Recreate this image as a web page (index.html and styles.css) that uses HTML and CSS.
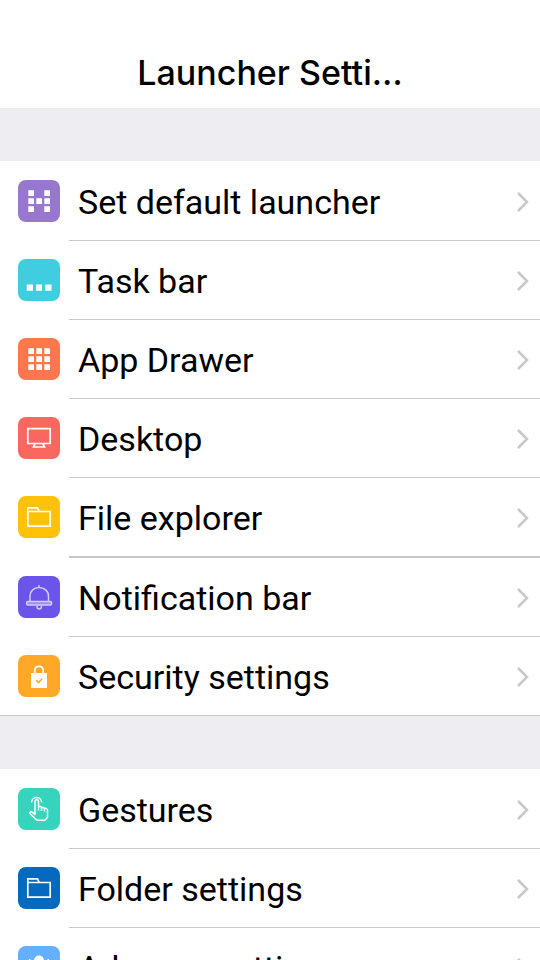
FILE: index.html
```html
<!DOCTYPE html>
<html lang="en">
<head>
<meta charset="utf-8">
<meta name="viewport" content="width=device-width, initial-scale=1">
<title>Launcher Settings</title>
<link rel="stylesheet" href="styles.css">
</head>
<body>
<header class="bar"><h1 class="title">Launcher Setti…</h1></header>
<main>
<nav class="group">
<a class="row" href="#default"><svg class="icon purple" viewBox="0 0 42 42"><path class="solid" d="M10.300 10.300h5.700v5.700h-5.700zM26.300 10.300h5.700v5.700h-5.700zM10.300 18.300h5.700v5.700h-5.700zM18.300 18.300h5.700v5.700h-5.700zM26.300 18.300h5.700v5.700h-5.700zM10.300 26.300h5.700v5.700h-5.700zM26.300 26.300h5.700v5.700h-5.700z"/></svg><span class="cell"><span class="label">Set default launcher</span><svg class="chevron" viewBox="0 0 12 20"><path d="M1 1l9 9-9 9"/></svg></span></a>
<a class="row" href="#taskbar"><svg class="icon cyan" viewBox="0 0 42 42"><path class="solid" d="M8.700 25.500h6.300v6.300h-6.300zM18 25.500h6v6.300h-6zM27.200 25.500h6.300v6.300h-6.300z"/></svg><span class="cell"><span class="label">Task bar</span><svg class="chevron" viewBox="0 0 12 20"><path d="M1 1l9 9-9 9"/></svg></span></a>
<a class="row" href="#drawer"><svg class="icon orange" viewBox="0 0 42 42"><path class="solid" d="M10.300 10.300h5.700v5.700h-5.700zM18.300 10.300h5.700v5.700h-5.700zM26.300 10.300h5.700v5.700h-5.700zM10.300 18.300h5.700v5.700h-5.700zM18.300 18.300h5.700v5.700h-5.700zM26.300 18.300h5.700v5.700h-5.700zM10.300 26.300h5.700v5.700h-5.700zM18.300 26.300h5.700v5.700h-5.700zM26.300 26.300h5.700v5.700h-5.700z"/></svg><span class="cell"><span class="label">App Drawer</span><svg class="chevron" viewBox="0 0 12 20"><path d="M1 1l9 9-9 9"/></svg></span></a>
<a class="row" href="#desktop"><svg class="icon red" viewBox="0 0 42 42"><path class="line" d="M9.800 11.700h22.400v14.800h-22.400zM17 27l-1.500 3h11l-1.500-3"/></svg><span class="cell"><span class="label">Desktop</span><svg class="chevron" viewBox="0 0 12 20"><path d="M1 1l9 9-9 9"/></svg></span></a>
<a class="row" href="#files"><svg class="icon yellow" viewBox="0 0 42 42"><path class="line" d="M9.800 15.500V11.800h9.700l1.700 3.700M9.800 15.500h22.400v14.700h-22.400z"/></svg><span class="cell"><span class="label">File explorer</span><svg class="chevron" viewBox="0 0 12 20"><path d="M1 1l9 9-9 9"/></svg></span></a>
<a class="row" href="#notifications"><svg class="icon violet" viewBox="0 0 42 42"><path class="line soft" d="M12 25v-5c0-5 4-8.500 9-8.500s9.500 3.500 9.500 8.500v5M21 9v2.500M19 30c0 4 4.500 4 4.500 0"/><rect class="line soft shade" x="8.700" y="25.500" width="24.800" height="3.500" rx="1"/></svg><span class="cell"><span class="label">Notification bar</span><svg class="chevron" viewBox="0 0 12 20"><path d="M1 1l9 9-9 9"/></svg></span></a>
<a class="row" href="#security"><svg class="icon amber" viewBox="0 0 42 42"><path class="solid" d="M13 18h16v15h-16z"/><path class="line" d="M16.800 18v-2.500c0-5.500 8.400-5.500 8.400 0V18"/><path class="check" d="M18.200 25l2.300 2.500 3.700-3.700"/></svg><span class="cell"><span class="label">Security settings</span><svg class="chevron" viewBox="0 0 12 20"><path d="M1 1l9 9-9 9"/></svg></span></a>
</nav>
<nav class="group">
<a class="row" href="#gestures"><svg class="icon green" viewBox="0 0 42 42"><path class="line thin" d="M17 26V13.500c0-2.400 3.500-2.400 3.500 0v5.500c1-1 3-.5 3 .8 1-.8 2.700-.3 3 .9 1.500-.8 3-.1 3 1.500v7L27 32.200h-8L12.300 26c-1.300-1.700.4-3 1.800-1.900L17 26.500zM20.500 18.500v4M23.500 20v3M26.500 21v2.500M13.600 14.500c0-6.700 10-6.700 10 0"/></svg><span class="cell"><span class="label">Gestures</span><svg class="chevron" viewBox="0 0 12 20"><path d="M1 1l9 9-9 9"/></svg></span></a>
<a class="row" href="#folders"><svg class="icon blue" viewBox="0 0 42 42"><path class="line" d="M9.800 15.500V11.800h9.700l1.700 3.700M9.800 15.500h22.400v14.700h-22.400z"/></svg><span class="cell"><span class="label">Folder settings</span><svg class="chevron" viewBox="0 0 12 20"><path d="M1 1l9 9-9 9"/></svg></span></a>
<a class="row" href="#advance"><svg class="icon sky" viewBox="0 0 42 42"><circle class="solid" cx="21" cy="14.500" r="5"/><path class="solid" d="M11 13h1.500v2H11zM29.500 13H31v2h-1.500zM12 32c0-12 18-12 18 0z"/></svg><span class="cell"><span class="label">Advance settings</span><svg class="chevron" viewBox="0 0 12 20"><path d="M1 1l9 9-9 9"/></svg></span></a>
</nav>
</main>
</body>
</html>
```
FILE: styles.css
```css
body {
  margin: 0;
  background: #eeedf2;
  color: #000;
  font-family: Roboto, sans-serif;
}
.bar {
  display: flex;
  justify-content: center;
  padding: 49px 0 11px;
  background: #fff;
}
.title {
  margin: 0;
  font: 500 34px/48px Inter, sans-serif;
}
.group {
  margin-top: 53px;
  padding-top: 1px;
  background: #fff;
}
.row {
  display: flex;
  align-items: flex-start;
  gap: 9px;
  padding-left: 18px;
  color: inherit;
  text-decoration: none;
}
.icon {
  flex: none;
  width: 42px;
  height: 42px;
  margin-top: 18px;
  border-radius: 8px;
}
.cell {
  flex: 1;
  display: flex;
  align-items: center;
  justify-content: space-between;
  height: 76px;
  padding: 2px 11px 0 9px;
  border-bottom: 1px solid #c8c7cc;
}
.row:nth-child(5) .cell { border-bottom-width: 2px; }
.row:last-child .cell { border-bottom-color: transparent; }
.row:last-child { box-shadow: inset 0 -1px #c8c7cc; }
.label {
  font-size: 34px;
  line-height: 40px;
}
.chevron {
  width: 12px;
  height: 20px;
  fill: none;
  stroke: #c7c7cc;
  stroke-width: 2.5;
}
.solid { fill: #fff; }
.line { fill: none; stroke: #fff; stroke-width: 1.7; }
.thin { stroke-width: 1.5; stroke-linejoin: round; }
.soft { stroke: #d3cbfb; stroke-width: 1.5; }
.shade { fill: #9c8cf1; }
.check { fill: none; stroke: #ffa726; stroke-width: 1.6; }
.purple { background: #9878cf; }
.cyan { background: #40cde0; }
.orange { background: #ff774d; }
.red { background: #f9675f; }
.yellow { background: #ffc208; }
.violet { background: #6b54ea; }
.amber { background: #ffa726; }
.green { background: #37d4bd; }
.blue { background: #0569bd; }
.sky { background: #64b0ff; }
```
